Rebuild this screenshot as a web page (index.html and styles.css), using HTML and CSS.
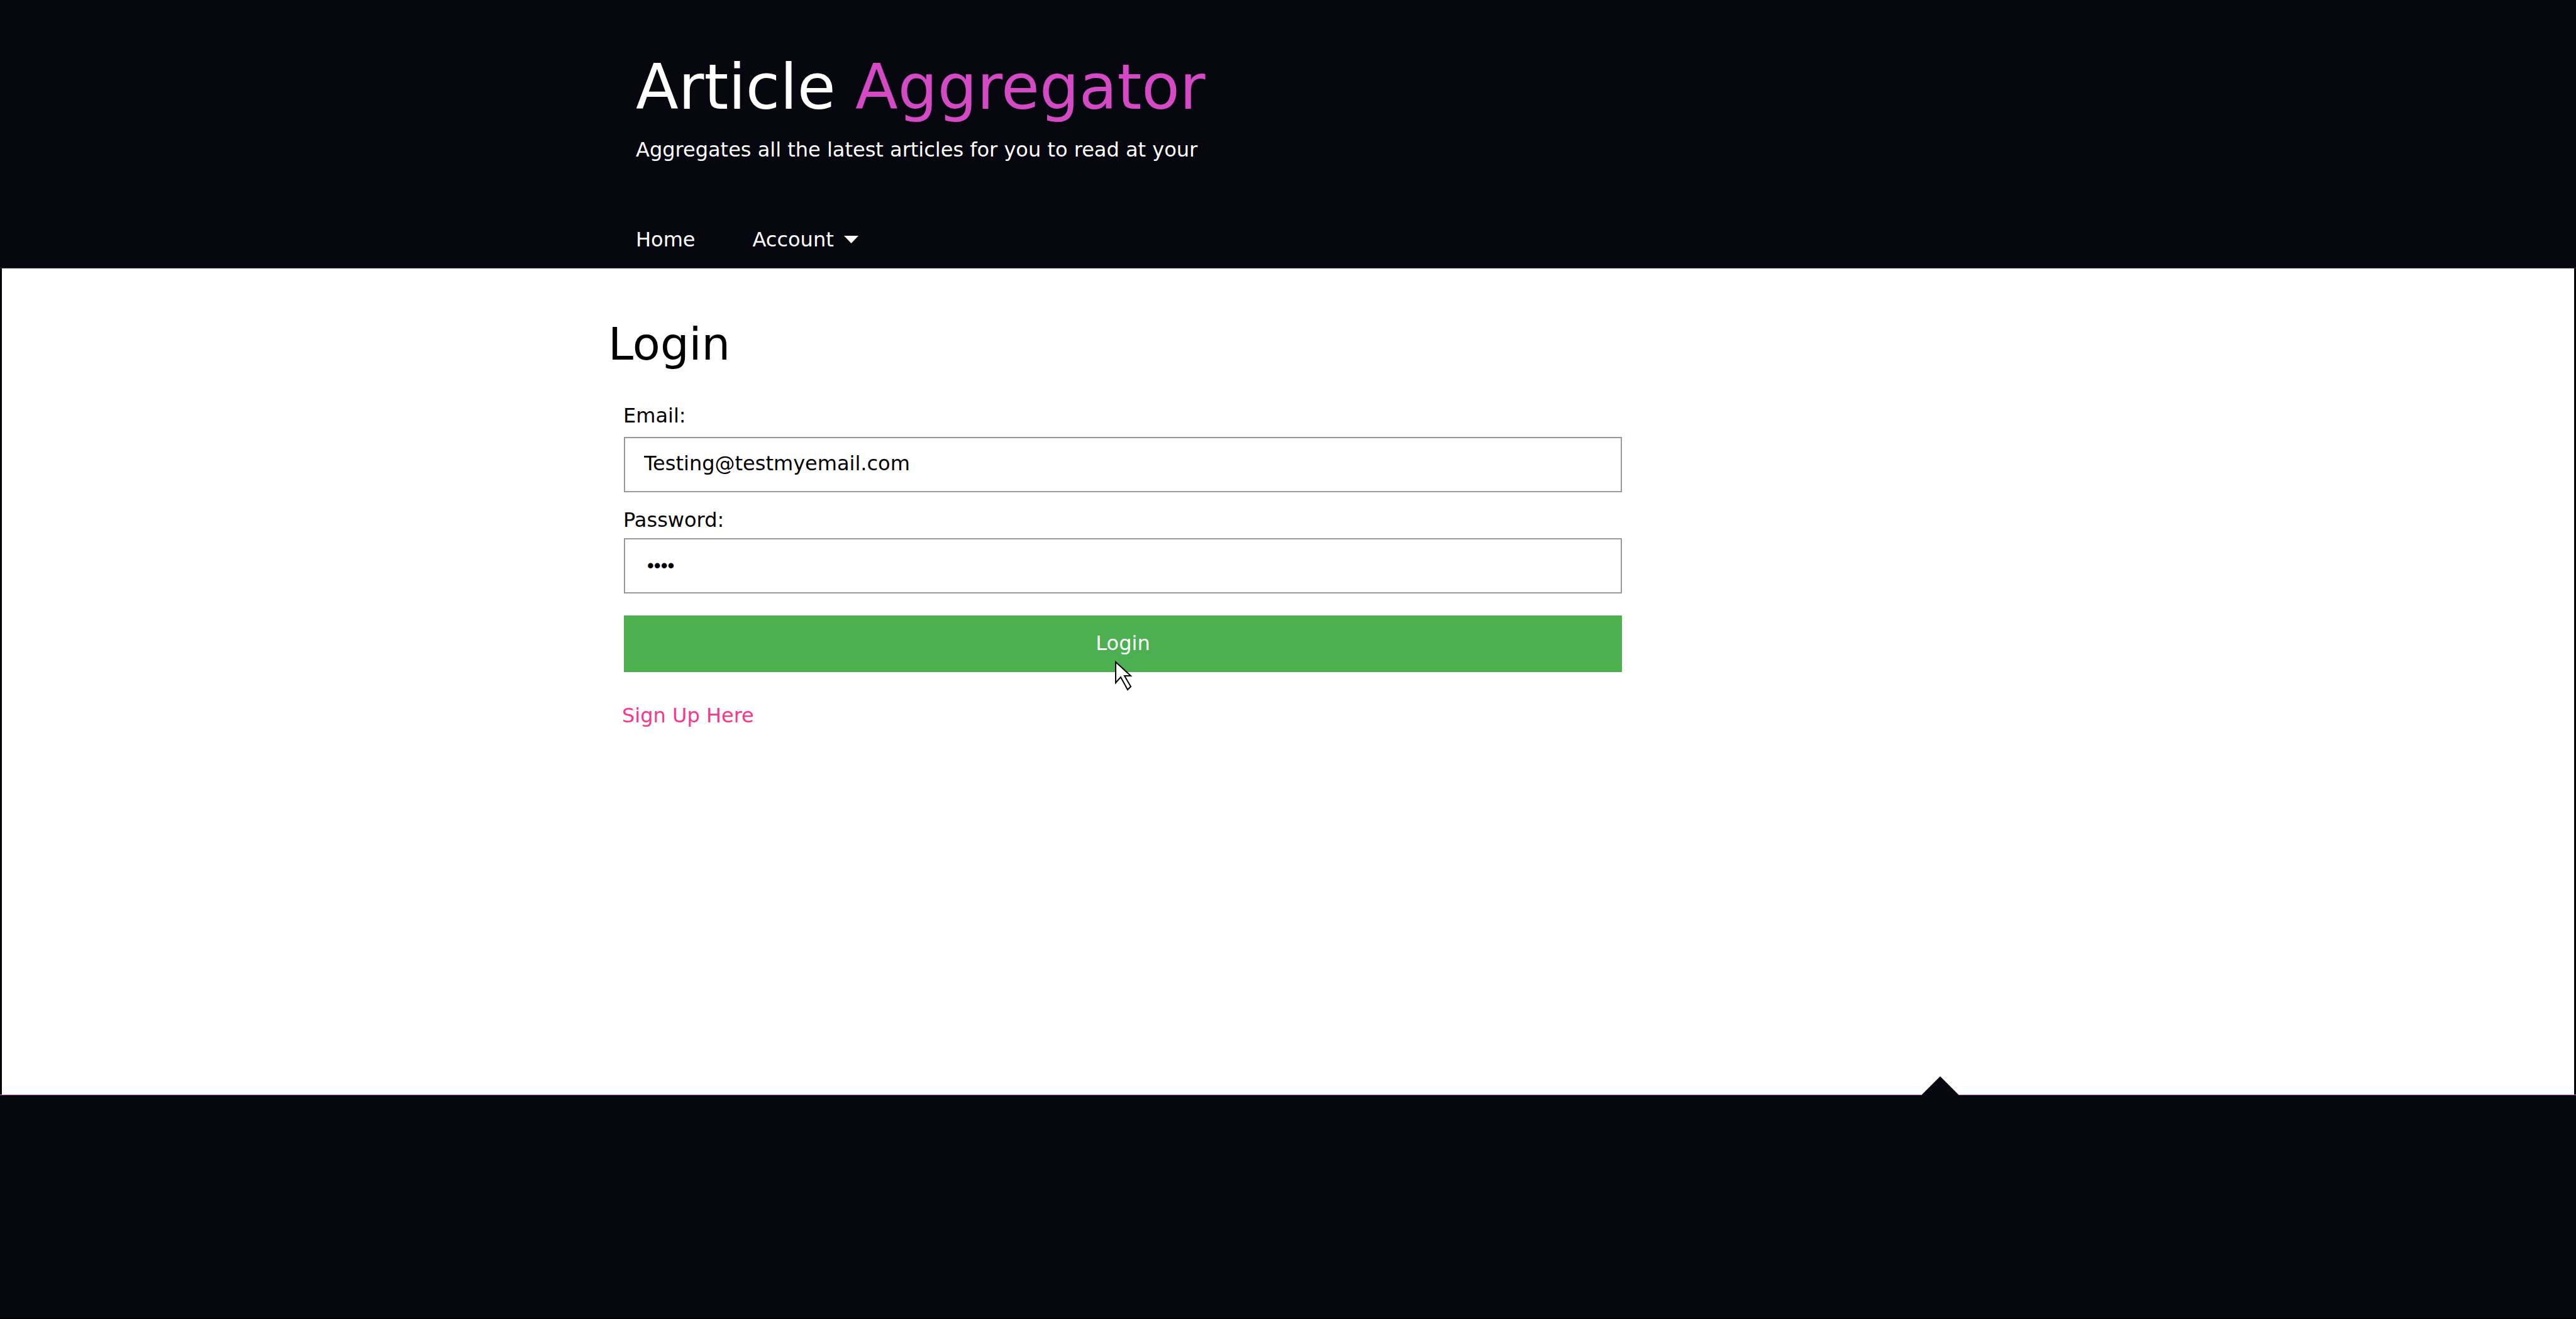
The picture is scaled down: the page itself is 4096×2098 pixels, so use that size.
FILE: index.html
```html
<!DOCTYPE html>
<html lang="en">
<head>
<meta charset="utf-8">
<title>Article Aggregator</title>
<link rel="stylesheet" href="styles.css">
</head>
<body>
<header class="site-header">
  <div class="container header-inner">
    <div class="brand">Article <span class="brand-accent">Aggregator</span></div>
    <p class="tagline">Aggregates all the latest articles for you to read at your</p>
    <nav class="nav">
      <a class="nav-item" href="#">Home</a>
      <button class="nav-item" type="button">Account
        <svg class="caret" viewBox="0 0 23 12" aria-hidden="true"><path d="M0 0H23L11.5 12Z" fill="#fff"/></svg>
      </button>
    </nav>
  </div>
</header>
<main class="main">
  <div class="container">
    <h1 class="title">Login</h1>
    <form class="form">
      <label class="label" for="email">Email:</label>
      <input class="control email" id="email" type="email" value="Testing@testmyemail.com">
      <label class="label" for="password">Password:</label>
      <input class="control password" id="password" type="password" value="test">
      <button class="submit" type="submit">Login
        <svg class="pointer" viewBox="0 0 30 50" aria-hidden="true"><path d="M2 4V37L10 28L21 48L26 43L16 26H26Z" fill="#fff" stroke="#000" stroke-width="2"/></svg>
      </button>
    </form>
    <p class="signup"><a class="signup-link" href="#">Sign Up Here</a></p>
  </div>
</main>
<footer class="footer">
  <div class="container footer-inner">
    <svg class="notch" viewBox="0 0 58 30" aria-hidden="true"><path d="M0 29L29 0L58 29V30H0Z" fill="#070710"/></svg>
  </div>
</footer>
</body>
</html>
```
FILE: styles.css
```css
* {
  box-sizing: border-box;
}

body {
  display: flex;
  flex-direction: column;
  min-height: 100vh;
  margin: 0;
  background: #070710;
  color: #000;
  font: 32px/40px "DejaVu Sans", sans-serif;
}

button,
input {
  font: inherit;
}

.container {
  width: 90%;
  max-width: 2162px;
  margin: 0 auto;
}

.site-header {
  padding: 81px 0 25px;
  border-bottom: 1px solid #36363d;
  color: #fff;
}

.header-inner {
  padding-left: 44px;
}

.brand {
  font-size: 99px;
  line-height: 116px;
}

.brand-accent {
  color: #d44ac4;
}

.tagline {
  margin: 21px 0 103px;
}

.nav {
  display: flex;
  gap: 91px;
}

.nav-item {
  display: flex;
  align-items: center;
  gap: 16px;
  padding: 0;
  border: 0;
  background: none;
  color: #fff;
  text-decoration: none;
}

.caret {
  width: 23px;
  height: 12px;
}

.main {
  flex: 1;
  padding: 78px 0 100px;
  border: solid #040209;
  border-width: 0 3px;
  background: #fff;
}

.title {
  margin: 0 0 52px;
  font-size: 72px;
  font-weight: 400;
  line-height: 84px;
}

.form {
  display: flex;
  flex-direction: column;
  width: 100%;
  max-width: 1612px;
  padding-left: 24px;
}

.control {
  height: 88px;
  margin: 0 0 24px 1px;
  padding: 0 30px 4px;
  border: 2px solid #999;
  border-radius: 0;
  background: #fff;
  color: #000;
}

.email {
  margin-top: 14px;
}

.password {
  margin-top: 9px;
  margin-bottom: 35px;
  padding: 0 35px;
  font-family: "Liberation Sans", sans-serif;
  font-size: 31px;
}

.submit {
  position: relative;
  height: 90px;
  margin-left: 1px;
  padding: 0 0 2px;
  border: 0;
  background: #4caf50;
  color: #fff;
}

.pointer {
  position: absolute;
  top: 70px;
  left: calc(50% - 14px);
  width: 30px;
  height: 50px;
}

.signup {
  margin: 49px 0 0;
  padding-left: 22px;
}

.signup-link {
  color: #f9368c;
  text-decoration: none;
}

.footer {
  min-height: 357px;
  border-top: 1px solid #dd5fd0;
  border-bottom: 2px solid #000;
}

.footer-inner {
  position: relative;
}

.notch {
  position: absolute;
  top: -30px;
  right: 15px;
  width: 58px;
  height: 30px;
}
```
